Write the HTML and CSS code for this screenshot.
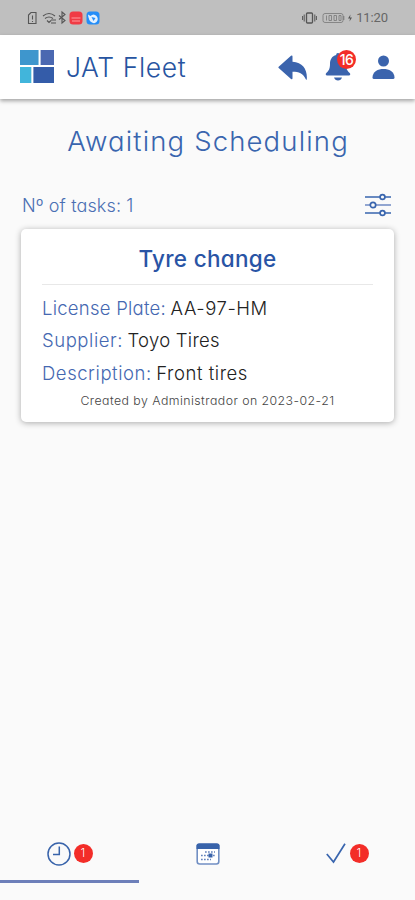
FILE: index.html
```html
<!DOCTYPE html>
<html lang="en">
<head>
<meta charset="utf-8">
<title>JAT Fleet</title>
<link rel="stylesheet" href="styles.css">
</head>
<body>
<div class="status">
  <svg class="status-left" width="74" height="16" viewBox="0 0 74 16" fill="none" stroke="#555" stroke-width="1.1">
    <path d="M4 2.5h5v11H1.500V5zM5.500 5.500v4M5.500 11v1"/>
    <path d="M16 6q6-5 12 0M18 8.500q4-3 8 0M20 10.500l2 2 2-2M24 10h5M24 13h5"/>
    <path d="M32 5.500l6 5-3 2.500v-11l3 2.500-6 5"/>
    <rect x="42.500" y="1.500" width="13" height="13" rx="3.500" fill="#f03b45" stroke="none"/>
    <path d="M44.500 8h9M45 11h8" stroke="#ff9ca0" stroke-width="1"/>
    <rect x="59.500" y="1.500" width="13" height="13" rx="3.500" fill="#238df8" stroke="none"/>
    <path d="M61 4.500l2.500 1.500q3-3 6 0 2.500 3 0 6-2 2-4.500.5Q61.500 11 61 4.500z" fill="#e3f1ff" stroke="none"/>
    <path d="M64.500 7l4 1-2 3z" fill="#238df8" stroke="none"/>
  </svg>
  <div class="status-right">
    <svg width="50" height="14" viewBox="0 0 50 14" fill="none" stroke="#555">
      <rect x="4.500" y="2" width="6" height="10" rx="1" stroke-width="1.300"/>
      <path d="M2.200 3.500v7M12.800 3.500v7M.6 5v4M14.400 5v4"/>
      <rect x="21" y="2.500" width="20" height="9" rx="2" stroke="#777" stroke-width=".8"/>
      <path d="M41.800 5v4" stroke="#777"/>
      <path d="M24.500 4.500v5M27 4.500h2.500v5H27zM32 4.500h2.500v5H32zM37 4.500h2v5h-2z" stroke="#777" stroke-width=".8"/>
      <path d="M48.500 3.500L46 7.500h2l-.5 3L50 6.500h-2z" fill="#555" stroke="none"/>
    </svg>
    <span class="time">11:20</span>
  </div>
</div>
<header class="bar">
  <svg class="logo" width="34" height="33" viewBox="0 0 33 33" preserveAspectRatio="none">
    <path fill="#3e96cd" d="M0 0h18v15H0z"/><path fill="#4b68b1" d="M20 0h13v15H20z"/>
    <path fill="#41b5db" d="M0 17h11v16H0z"/><path fill="#345ca9" d="M13 17h20v16H13z"/>
  </svg>
  <span class="brand">JAT Fleet</span>
  <svg class="back" width="30" height="26" viewBox="0 0 30 26"><path fill="#3b64ad" d="M.7 11.800L13 .8q1.500-1 1.500.7v5.300C25 7.300 29.500 15 28.800 24.200q-.2 1.300-1 0C25 18 21 16.700 14.500 16.700v6.600q0 1.700-1.500.7L.7 13q-.6-.6 0-1.200z"/></svg>
  <div class="bell">
    <svg width="26" height="28" viewBox="0 0 26 28" fill="#3b64ad"><path d="M13 0c1.300 0 1.800.8 1.800 2C19 3 21 6.500 21 11c0 5 1.500 7 3.700 9 1 1 .6 2.500-.8 2.500H2.100C.7 22.500.3 21 1.300 20 3.500 18 5 16 5 11c0-4.500 2-8 6.200-9 0-1.200.5-2 1.800-2zM9 24.500h8q-1 3-4 3t-4-3z"/></svg>
    <span class="count">16</span>
  </div>
  <svg class="user" width="23" height="25" viewBox="0 0 23 25" fill="#3b64ad"><circle cx="11.500" cy="6" r="5.500"/><path d="M.5 22.500C.5 16.500 6 14 11.500 14s11 2.500 11 8.500q0 1.500-1.500 1.500H2q-1.500 0-1.500-1.500z"/></svg>
</header>
<main>
  <h1>Awaiting Scheduling</h1>
  <div class="summary">
    <span class="tasks">Nº of tasks: 1</span>
    <svg width="28" height="24" viewBox="0 0 28 24" fill="#fafafa" stroke="#3965ae" stroke-width="1.700"><path d="M1 4h26M1 20h26"/><path d="M1 12h26" stroke="#7f96c9"/><circle cx="18.500" cy="4" r="2.400"/><circle cx="9" cy="12" r="2.700"/><circle cx="18.500" cy="20" r="2.400"/></svg>
  </div>
  <section class="card">
    <h2>Tyre change</h2>
    <p><span class="label plate">License Plate:</span><span class="value">AA-97-HM</span></p>
    <p><span class="label">Supplier:</span><span class="value supplier">Toyo Tires</span></p>
    <p><span class="label">Description:</span><span class="value">Front tires</span></p>
    <small>Created by Administrador on 2023-02-21</small>
  </section>
</main>
<nav>
  <div class="tab active">
    <svg width="24" height="24" viewBox="0 0 24 24" fill="none" stroke="#3863aa" stroke-width="1.500"><circle cx="12" cy="12" r="11"/><path d="M12.300 4.500V12.500H6"/></svg>
    <span class="badge">1</span>
  </div>
  <div class="tab">
    <svg width="24" height="22" viewBox="0 0 24 22"><rect x="1.200" y="1" width="21.600" height="20" rx="2.500" fill="#fff" stroke="#718fc3" stroke-width="1.600"/><path d="M.5 6V2.500Q.5.500 3 .5h18q2.500 0 2.500 2V6z" fill="#3863aa"/><path d="M9 9h10M5 12.500h14M5 16.500h10" stroke="#6483bc" stroke-width="1.700" stroke-dasharray="1.700 1.300"/><path d="M12.500 10.500h4v4h-4z" fill="#3863aa"/></svg>
  </div>
  <div class="tab done">
    <svg width="20" height="21" viewBox="0 0 20 21" fill="none" stroke="#3965ae" stroke-width="1.700"><path d="M.8 11l6.700 8L19 .8"/></svg>
    <span class="badge">1</span>
  </div>
</nav>
</body>
</html>
```
FILE: styles.css
```css
* { box-sizing: border-box; }
body { margin: 0; width: 415px; height: 900px; display: flex; flex-direction: column; overflow: hidden; background: #fafafa; color: #222; font-family: Inter, "Liberation Sans", sans-serif; font-feature-settings: "cv11", "ss03"; font-weight: 300; }
h1, h2, p { margin: 0; font-weight: inherit; white-space: nowrap; }
svg { display: block; flex: none; }
.status { height: 35px; background: #bfbfbf; display: flex; justify-content: space-between; padding: 10px 27px 0 27px; }
.status-right { display: flex; gap: 4px; align-items: center; height: 16px; }
.time { font: 13px/16px Roboto, sans-serif; color: #666; letter-spacing: -.1px; }
.bar { height: 64px; background: #fff; box-shadow: 0 2px 4px rgba(0, 0, 0, .35); display: flex; align-items: center; padding: 0 20px 1px; flex: none; }
.logo { margin-bottom: 1px; }
.brand { margin: 0 auto 0 12px; font-size: 26.5px; line-height: 32px; letter-spacing: .6px; color: #2754a1; }
.back { margin: 3px 17px 0 0; }
.bell { position: relative; margin-right: 21px; }
.bell, .user { margin-top: 1px; }
.count { position: absolute; left: 12px; top: -3px; width: 19px; height: 19px; border-radius: 50%; background: #f32d28; color: #fff; text-align: center; font-size: 14px; line-height: 19px; font-weight: 500; letter-spacing: -.6px; }
main { flex: 1; padding: 0 21px; }
h1 { margin-top: 24px; height: 36px; line-height: 36px; text-align: center; font-size: 27.5px; letter-spacing: 1.15px; color: #3965ae; padding-left: 1px; }
.summary { margin-top: 30px; height: 32px; display: flex; justify-content: space-between; align-items: center; padding: 0 2px 0 1px; }
.tasks { font-size: 18px; letter-spacing: .12px; color: #4a6fb3; }
.card { margin-top: 8px; height: 193px; background: #fff; border-radius: 5px; padding: 12px 21px 0; box-shadow: 0 1px 6px rgba(0, 0, 0, .32); }
h2 { height: 44px; line-height: 35px; border-bottom: 1px solid #e8e8e8; margin-bottom: 7px; text-align: center; font-size: 22.5px; letter-spacing: .3px; font-weight: 500; color: #2954a5; }
.card p { height: 32.3px; line-height: 32.3px; font-size: 18.5px; letter-spacing: .55px; display: flex; gap: 4.5px; }
.label { color: #4568b1; }
.plate, .supplier { letter-spacing: .25px; }
small { display: flex; justify-content: center; margin-top: 2px; font-size: 12.3px; line-height: 20px; letter-spacing: .46px; color: #444; white-space: nowrap; }
nav { height: 70px; display: grid; grid-template-columns: 139px 1fr 139px; }
.tab { display: flex; align-items: center; justify-content: center; gap: 3px; height: 53px; border-bottom: 3px solid transparent; padding-bottom: 3px; }
.active { border-color: #6d7fb9; }
.done { gap: 4px; padding-left: 3px; }
.badge { width: 19px; height: 19px; border-radius: 50%; background: #f32d28; color: #fff; font-size: 11px; line-height: 19px; text-align: center; }
```
